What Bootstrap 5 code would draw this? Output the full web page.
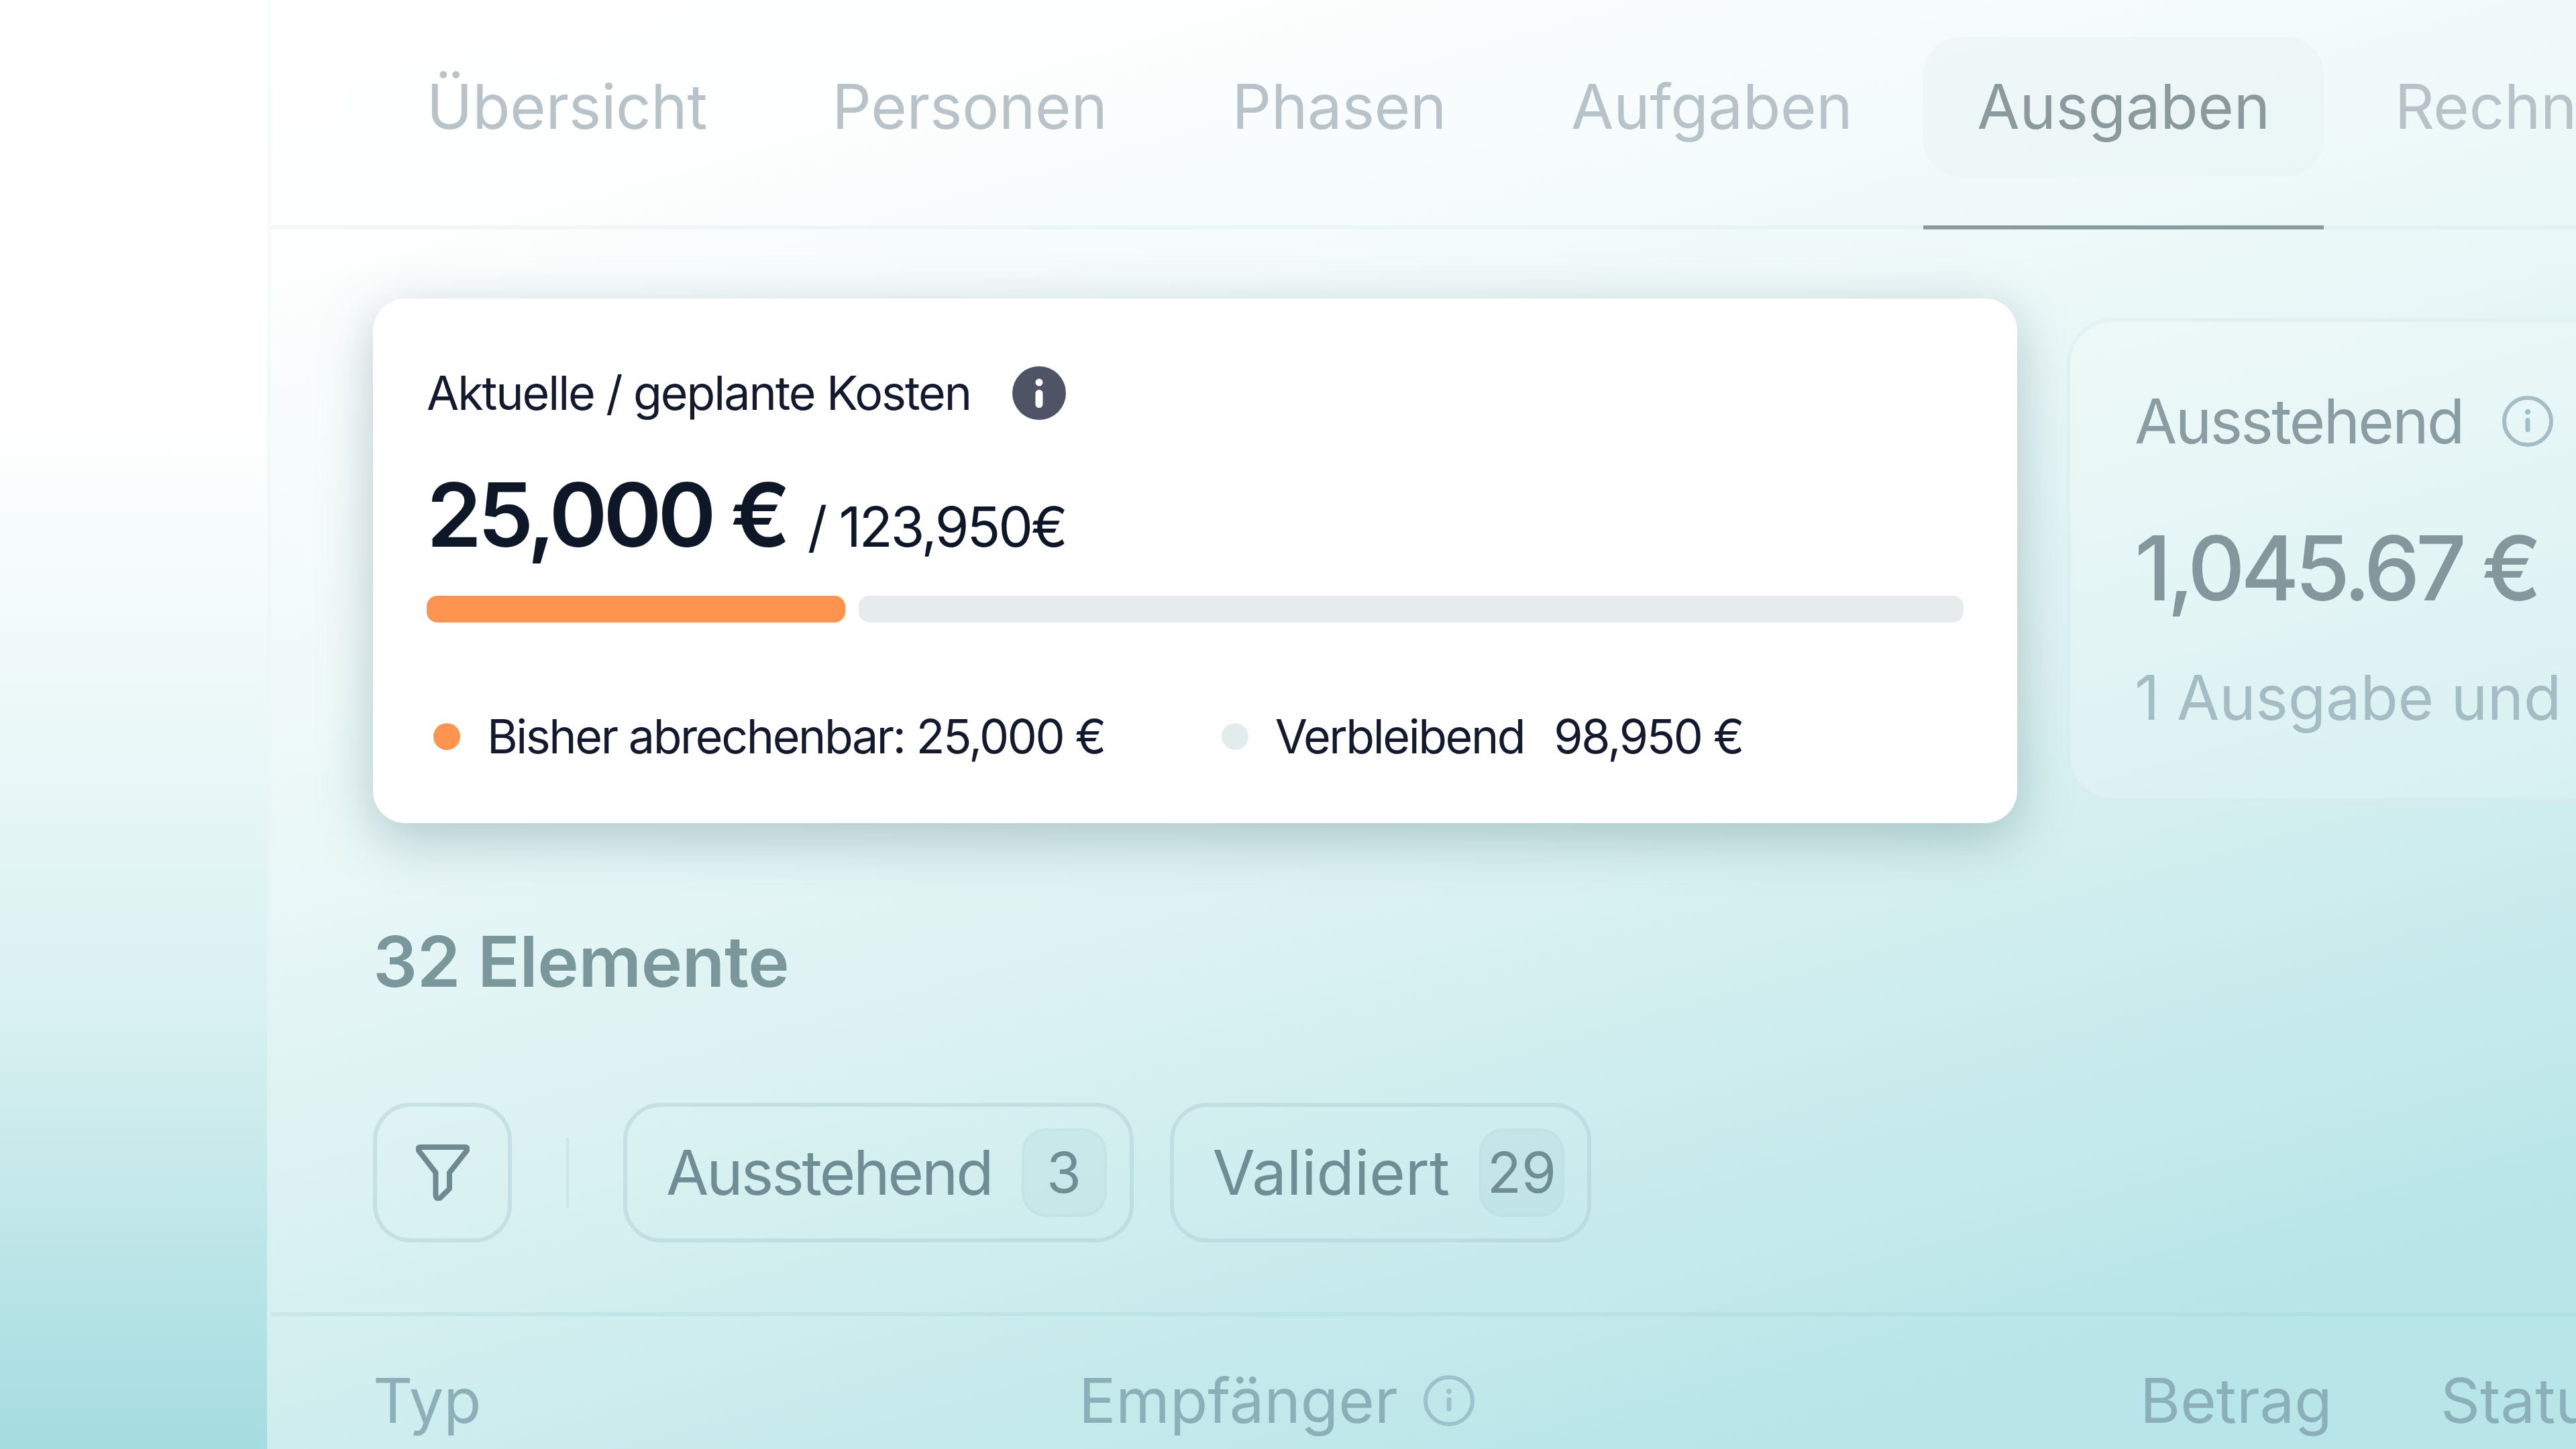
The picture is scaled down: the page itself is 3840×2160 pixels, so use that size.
<!DOCTYPE html>
<html lang="de">
<head>
  <meta charset="UTF-8" />
  <title>Ausgaben</title>
  <link href="https://cdn.jsdelivr.net/npm/bootstrap@5.3.0/dist/css/bootstrap.min.css" rel="stylesheet"/>
  <style>
    html, body { height: 100%; }
    body {
      overflow: hidden;
      font-family: "Inter", "Liberation Sans", sans-serif;
      background: #fff;
    }
    .app-shell { height: 2160px; width: 3840px; overflow: hidden; }
    .side-rail {
      width: 398px;
      flex: none;
      background: linear-gradient(180deg, #fff 0, #fff 620px, #d9f1f1 1500px, #a5dce0 2160px);
    }
    .main-pane {
      flex: 1;
      min-width: 0;
      border-left: 6px solid rgba(215, 235, 238, .16);
      background: linear-gradient(164deg, #fff 0, #fdfefe 400px, #eef9f9 1080px, #dcf2f2 1720px, #b7e5e8 2720px);
      background-origin: border-box;
    }

    /* tabs */
    .tab-strip {
      height: 342px;
      padding-left: 152px;
      gap: 26px;
      flex-wrap: nowrap;
      border-bottom: 6px solid rgba(200, 222, 225, .22);
    }
    .tab-item { height: 342px; padding-top: 55px; margin-bottom: -6px; flex: none; }
    .tab-item.is-active { border-bottom: 6px solid #8b9b9f; }
    .tab-link {
      display: block;
      height: 208px;
      padding: 0 80px;
      line-height: 208px;
      font-size: 92px;
      letter-spacing: -.3px;
      color: #b8c3c9;
      text-decoration: none;
      border-radius: 56px;
    }
    .is-active .tab-link { color: #8b9a9e; background: rgba(225, 238, 240, .3); }

    /* cost cards */
    .cost-card {
      width: 2451px;
      height: 782px;
      flex: none;
      margin-top: 103px;
      margin-left: 152px;
      padding: 101px 80px 0;
      background: #fff;
      border-radius: 48px;
      box-shadow: 0 22px 80px rgba(70, 110, 115, .35);
      color: #141a2e;
    }
    .cost-title { font-size: 70px; line-height: 80px; letter-spacing: -2.1px; gap: 62px; }
    .cost-amount { margin-top: 66px; line-height: 150px; font-size: 132px; font-weight: 600; color: #0d1727; letter-spacing: -6px; white-space: nowrap; }
    .cost-total { font-size: 82px; font-weight: 400; letter-spacing: -3px; margin-left: 4px; }
    .cost-bar { margin-top: 27px; height: 40px; gap: 20px; }
    .cost-used { width: 624px; background: #ff9350; border-radius: 16px; }
    .cost-left { flex: 1; background: #e6ebec; border-radius: 16px; }
    .cost-legend { margin-top: 130px; font-size: 70px; line-height: 80px; letter-spacing: -2.45px; white-space: nowrap; }
    .legend-dot { width: 40px; height: 40px; border-radius: 50%; flex: none; }
    .dot-used { background: #ff9350; margin-left: 10px; margin-right: 40px; }
    .dot-left { background: #e3ecec; margin-left: 174px; margin-right: 40px; }
    .legend-gap { margin-left: 44px; }

    .side-card {
      width: 1200px;
      height: 722px;
      flex: none;
      margin-top: 132px;
      margin-left: 73px;
      padding: 98px 0 0 96px;
      border: 6px solid rgba(205, 228, 230, .35);
      border-radius: 70px;
      background: rgba(255, 255, 255, .18);
      white-space: nowrap;
    }
    .side-title { font-size: 92px; line-height: 100px; color: #8a9da3; letter-spacing: -2.7px; gap: 58px; }
    .side-amount { margin-top: 94px; font-size: 133px; line-height: 150px; font-weight: 500; color: #84979d; letter-spacing: -6.5px; }
    .side-note { margin-top: 63px; font-size: 92px; line-height: 110px; color: #a4bcc3; letter-spacing: -.2px; }

    /* list */
    .list-head { padding-left: 152px; }
    .list-count { margin: 141px 0 0; font-size: 104px; line-height: 130px; font-weight: 600; color: #7a989c; letter-spacing: -.4px; }
    .filter-row { margin-top: 146px; height: 208px; align-items: center; }
    .filter-btn {
      width: 207px;
      height: 208px;
      border: 6px solid rgba(170, 205, 210, .45);
      border-radius: 56px;
      background: transparent;
    }
    .filter-sep { width: 4px; height: 105px; margin: 0 81px; background: rgba(170, 205, 210, .28); }
    .status-pill {
      height: 208px;
      padding: 0 34px 0 58px;
      margin-right: 54px;
      font-size: 92px;
      color: #6f8d95;
      border: 6px solid rgba(170, 205, 210, .45);
      border-radius: 56px;
      background: transparent;
      gap: 44px;
    }
    .pill-tight { letter-spacing: -3.1px; }
    .pill-count {
      display: flex;
      align-items: center;
      justify-content: center;
      width: 127px;
      height: 132px;
      font-size: 84px;
      font-weight: 400;
      letter-spacing: 0;
      color: #6f8d95;
      background: rgba(165, 205, 208, .2);
      border: 4px solid rgba(165, 205, 208, .14);
      border-radius: 36px;
    }
    .table-rule { margin-top: 104px; height: 6px; background: rgba(150, 200, 205, .2); }
    .table-head { padding: 80px 0 0 152px; font-size: 92px; line-height: 92px; color: #8bb0b9; white-space: nowrap; }
    .col-typ { width: 1052px; flex: none; }
    .col-emp { width: 1582px; flex: none; gap: 38px; }
    .col-bet { width: 448px; flex: none; }
  </style>
</head>
<body>

<div class="d-flex app-shell">
  <div class="side-rail"></div>

  <div class="main-pane">
    <ul class="nav tab-strip">
      <li class="tab-item"><a class="tab-link" href="#">Übersicht</a></li>
      <li class="tab-item"><a class="tab-link" href="#">Personen</a></li>
      <li class="tab-item"><a class="tab-link" href="#">Phasen</a></li>
      <li class="tab-item"><a class="tab-link" href="#">Aufgaben</a></li>
      <li class="tab-item is-active"><a class="tab-link" href="#">Ausgaben</a></li>
      <li class="tab-item"><a class="tab-link" href="#">Rechnungen</a></li>
    </ul>

    <div class="d-flex">
      <div class="cost-card">
        <div class="d-flex align-items-center cost-title">
          <span>Aktuelle / geplante Kosten</span>
          <svg width="80" height="80" viewBox="0 0 80 80"><circle cx="40" cy="40" r="40" fill="#4f5366"/><circle cx="40" cy="24" r="5.5" fill="#fff"/><rect x="34.500" y="35" width="11" height="27" rx="5.5" fill="#fff"/></svg>
        </div>
        <div class="cost-amount">25,000 € <span class="cost-total">/ 123,950€</span></div>
        <div class="d-flex cost-bar">
          <div class="cost-used"></div>
          <div class="cost-left"></div>
        </div>
        <div class="d-flex align-items-center cost-legend">
          <span class="legend-dot dot-used"></span>
          <span>Bisher abrechenbar: 25,000 €</span>
          <span class="legend-dot dot-left"></span>
          <span>Verbleibend</span>
          <span class="legend-gap">98,950 €</span>
        </div>
      </div>

      <div class="side-card">
        <div class="d-flex align-items-center side-title">
          <span>Ausstehend</span>
          <svg width="76" height="76" viewBox="0 0 76 76"><circle cx="38" cy="38" r="35" fill="none" stroke="#a5bec5" stroke-width="6"/><circle cx="38" cy="24" r="4" fill="#a5bec5"/><rect x="34.500" y="33" width="7" height="21" rx="3" fill="#a5bec5"/></svg>
        </div>
        <div class="side-amount">1,045.67 €</div>
        <div class="side-note">1 Ausgabe und</div>
      </div>
    </div>

    <div class="list-head">
      <h2 class="list-count">32 Elemente</h2>
      <div class="d-flex filter-row">
        <button class="btn d-flex align-items-center justify-content-center p-0 filter-btn" type="button" aria-label="Filter">
          <svg width="80" height="84" viewBox="0 0 80 84"><path d="M7 4H73Q78 4 76 9L50 42V66L36 80Q29 82 29.500 74V42L4 9Q2 4 7 4Z" fill="none" stroke="#6f8991" stroke-width="8" stroke-linejoin="round"/></svg>
        </button>
        <div class="filter-sep"></div>
        <button class="btn d-flex align-items-center status-pill pill-tight" type="button">Ausstehend <span class="pill-count">3</span></button>
        <button class="btn d-flex align-items-center status-pill" type="button">Validiert <span class="pill-count">29</span></button>
      </div>
    </div>

    <div class="table-rule"></div>
    <div class="d-flex table-head">
      <div class="col-typ">Typ</div>
      <div class="d-flex align-items-center col-emp">
        <span>Empfänger</span>
        <svg width="76" height="76" viewBox="0 0 76 76"><circle cx="38" cy="38" r="35" fill="none" stroke="#9cc3cb" stroke-width="6"/><circle cx="38" cy="24" r="4" fill="#9cc3cb"/><rect x="34.500" y="33" width="7" height="21" rx="3" fill="#9cc3cb"/></svg>
      </div>
      <div class="col-bet">Betrag</div>
      <div>Status</div>
    </div>
  </div>
</div>

<script src="https://cdn.jsdelivr.net/npm/bootstrap@5.3.0/dist/js/bootstrap.bundle.min.js"></script>
</body>
</html>
